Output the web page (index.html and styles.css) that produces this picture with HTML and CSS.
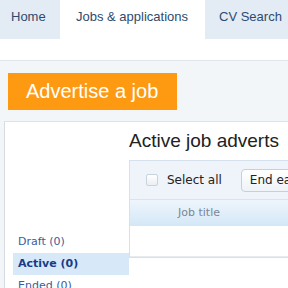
FILE: index.html
```html
<!DOCTYPE html>
<html>
<head>
<meta charset="utf-8">
<link rel="stylesheet" href="styles.css">
</head>
<body>
<nav class="nav">
  <a class="tab tab-home">Home</a>
  <a class="tab tab-jobs active">Jobs &amp; applications</a>
  <a class="tab tab-cv">CV Search</a>
</nav>
<div class="band"></div>
<div class="content">
  <a class="advertise">Advertise a job</a>
  <div class="panel">
    <aside class="sidebar">
      <ul class="status-list">
        <li>Draft (0)</li>
        <li class="current">Active (0)</li>
        <li>Ended (0)</li>
      </ul>
    </aside>
    <main class="main">
      <h1 class="heading">Active job adverts</h1>
      <div class="table">
        <div class="toolbar">
          <span class="checkbox"></span>
          <span class="select-all">Select all</span>
          <span class="btn">End early</span>
        </div>
        <div class="thead">
          <span class="th-title">Job title</span>
        </div>
        <div class="empty-row"></div>
      </div>
    </main>
  </div>
</div>
</body>
</html>
```
FILE: styles.css
```css
html, body {
  margin: 0;
  padding: 0;
  overflow: hidden;
  background: #f3f6f9;
  font-family: "Liberation Sans", Arial, sans-serif;
}
.nav {
  display: flex;
  height: 39px;
  background: #e3ecf5;
  width: 600px;
}
.tab {
  display: block;
  height: 39px;
  box-sizing: border-box;
  padding-top: 8px;
  line-height: 18px;
  font-size: 13px;
  color: #2d4a70;
  white-space: nowrap;
}
.tab-home { width: 60px; padding-left: 11px; }
.tab-jobs { width: 145px; padding-left: 16px; }
.tab-cv { padding-left: 14px; }
.tab.active { background: #ffffff; }
.band {
  height: 21px;
  background: #ffffff;
  border-bottom: 1px solid #dfe5eb;
}
.content {
  padding-top: 12px;
}
.advertise {
  display: inline-block;
  margin-left: 8px;
  height: 37px;
  line-height: 37px;
  padding: 0 19px 0 18px;
  background: #fe9a12;
  color: #ffffff;
  font-size: 20px;
  white-space: nowrap;
}
.panel {
  margin-top: 11px;
  margin-left: 4px;
  width: 600px;
  height: 200px;
  background: #ffffff;
  border-top: 1px solid #dde3e9;
  border-left: 1px solid #d6dce2;
  display: grid;
  grid-template-columns: 124px 1fr;
}
.sidebar {
  padding-top: 109px;
}
.status-list {
  list-style: none;
  margin: 0 0 0 8px;
  padding: 0;
  font-family: "DejaVu Sans", Verdana, sans-serif;
  font-size: 11px;
}
.status-list li {
  height: 22px;
  line-height: 22px;
  padding-left: 5px;
  color: #3b5c9c;
}
.status-list li.current {
  background: #d7e9f8;
  color: #183b8a;
  font-weight: bold;
}
.main {
  display: block;
}
.heading {
  margin: 8px 0 8px 0;
  font-size: 19px;
  line-height: 22px;
  font-weight: normal;
  color: #222222;
  white-space: nowrap;
}
.table {
  border: 1px solid #d5e1ec;
  border-right: none;
  font-family: "DejaVu Sans", Verdana, sans-serif;
}
.toolbar {
  height: 38px;
  background: #eef4fa;
  border-bottom: 1px solid #d8e4ef;
  display: flex;
  align-items: center;
  padding-left: 16px;
  font-size: 12px;
  color: #222;
}
.checkbox {
  width: 10px;
  height: 10px;
  border: 1px solid #c9d3dc;
  border-radius: 2px;
  background: linear-gradient(#ffffff, #eaeef2);
  margin-right: 9px;
}
.select-all {
  margin-right: 19px;
  white-space: nowrap;
}
.btn {
  height: 21px;
  line-height: 21px;
  padding: 0 8px;
  border: 1px solid #c4d1dd;
  border-radius: 4px;
  background: linear-gradient(#ffffff, #eef3f8);
  white-space: nowrap;
}
.thead {
  height: 26px;
  line-height: 26px;
  background: linear-gradient(#eef5fc, #d4e7f7);
  font-size: 11px;
  color: #7b8794;
  padding-left: 48px;
}
.empty-row {
  height: 30px;
  background: #ffffff;
  border-bottom: 1px solid #e6ebf0;
}
```
